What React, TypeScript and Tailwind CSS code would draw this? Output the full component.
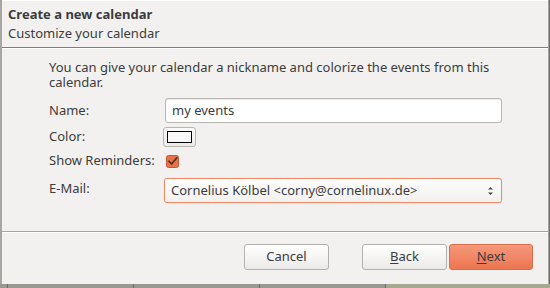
import React from 'react';

const font = { fontFamily: '"Noto Sans", "DejaVu Sans", sans-serif' };

const Field = ({ label, children }: { label: string; children: React.ReactNode }) => (
  <div className="flex items-center">
    <div className="w-[114px] shrink-0">{label}</div>
    {children}
  </div>
);

export default function App() {
  return (
    <div style={font} className="w-[550px] h-[288px] bg-[#6f6d69] flex flex-col text-[13px] text-[#3c3c3c] overflow-hidden">
      <div className="h-[284px] w-[549px] flex flex-col bg-[#f2f1f0] border-l-2 border-r border-[#a8a6a2]">
        {/* header */}
        <div className="h-[47px] shrink-0 px-[6px] pt-[4px] flex flex-col leading-[19px] bg-[#f2f1f0] border-t border-white">
          <div className="font-bold">Create a new calendar</div>
          <div>Customize your calendar</div>
        </div>
        <div className="h-px bg-[#807e7a]" />
        <div className="h-px bg-white" />

        {/* body */}
        <div className="flex-1 pl-[47px] pr-[46px] pt-[11px] flex flex-col">
          <p className="leading-[15px]">
            You can give your calendar a nickname and colorize the events from this calendar.
          </p>
          <div className="mt-[8px] flex flex-col gap-[4px]">
            <Field label="Name:">
              <div className="flex-1 h-[25px] ml-[2px] bg-white border border-[#b8b6b2] rounded-[3px] shadow-[inset_0_1px_1px_rgba(0,0,0,0.08)] flex items-center px-[6px]">
                my events
              </div>
            </Field>
            <Field label="Color:">
              <div className="w-[33px] h-[20px] border border-[#b8b6b2] rounded-[3px] bg-gradient-to-b from-[#fbfbfa] to-[#ecebe9] flex items-center justify-center">
                <div className="w-[25px] h-[12px] border border-black bg-[#f8f8f8]" />
              </div>
            </Field>
            <Field label="Show Reminders:">
              <div className="ml-[3px] h-[20px] flex items-center">
                <svg width="13" height="13" viewBox="0 0 13 13">
                  <rect x="0.5" y="0.5" width="12" height="12" rx="2" fill="#e8734a" stroke="#c25a36" />
                  <path d="M3 6.2 L5.6 9 L10.8 2.8" fill="none" stroke="#4a2a1c" strokeWidth="1.6" strokeLinecap="round" strokeLinejoin="round" />
                </svg>
              </div>
            </Field>
            <Field label="E-Mail:">
              <div className="flex-1 h-[25px] mt-[3px] ml-[1px] bg-gradient-to-b from-[#fdfdfc] to-[#f2f1f0] border border-[#f08a66] rounded-[3px] shadow-[0_0_1px_#f3a286] flex items-center pl-[6px] pr-[7px]">
                <span className="flex-1">Cornelius Kölbel &lt;corny@cornelinux.de&gt;</span>
                <svg width="7" height="12" viewBox="0 0 7 12">
                  <path d="M1 4.5 L3.5 2 L6 4.5 Z M1 7.5 L3.5 10 L6 7.5 Z" fill="#4a4a4a" />
                </svg>
              </div>
            </Field>
          </div>
        </div>

        <div className="h-px bg-[#a5a3a0]" />
        <div className="h-px bg-white" />

        {/* buttons */}
        <div className="h-[51px] shrink-0 flex justify-end items-start pt-[11px] pr-[15px]">
          <button className="w-[85px] h-[26px] rounded-[3px] border border-[#b3b1ad] bg-gradient-to-b from-white to-[#ebeae8] text-[#3c3c3c]">
            Cancel
          </button>
          <button className="ml-[33px] w-[85px] h-[26px] rounded-[3px] border border-[#b3b1ad] bg-gradient-to-b from-white to-[#ebeae8] text-[#3c3c3c]">
            <span className="underline underline-offset-2">B</span>ack
          </button>
          <button className="ml-[2px] w-[84px] h-[26px] rounded-[3px] border border-[#d9704b] bg-gradient-to-b from-[#f5987a] to-[#ec7550] text-[#3c3c3c]">
            <span className="underline underline-offset-2">N</span>ext
          </button>
        </div>
      </div>
      <div className="flex-1 flex bg-[#9a9893]">
        <div className="w-[8px] border-r border-[#6e6c68]" />
        <div className="w-[126px] border-r border-[#6e6c68]" />
        <div className="w-[126px] border-r border-[#6e6c68]" />
        <div className="w-[126px] border-r border-[#6e6c68]" />
        <div className="flex-1 bg-[#a7a98e]" />
      </div>
    </div>
  );
}
